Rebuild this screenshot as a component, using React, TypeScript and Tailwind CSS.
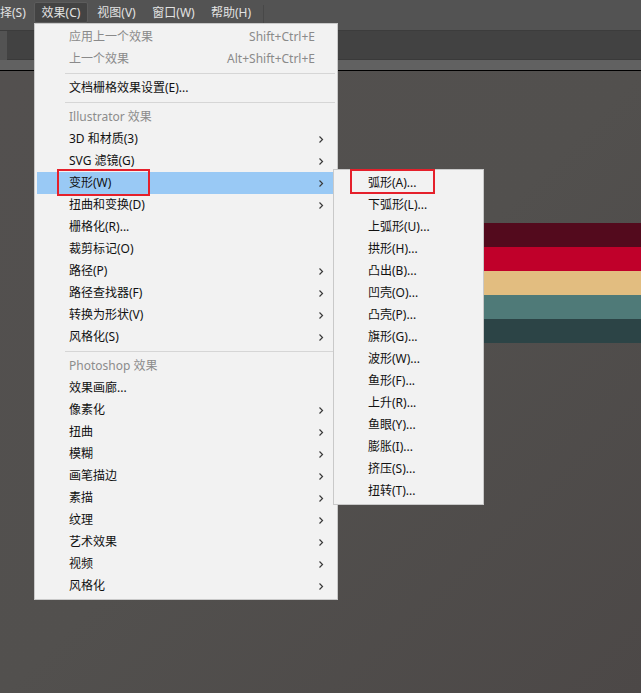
import React from 'react';

type Item = {
  label?: string;
  shortcut?: string;
  arrow?: boolean;
  disabled?: boolean;
  header?: boolean;
  sep?: boolean;
  active?: boolean;
};

const effectItems: Item[] = [
  { label: '应用上一个效果', shortcut: 'Shift+Ctrl+E', disabled: true },
  { label: '上一个效果', shortcut: 'Alt+Shift+Ctrl+E', disabled: true },
  { sep: true },
  { label: '文档栅格效果设置(E)...' },
  { sep: true },
  { label: 'Illustrator 效果', header: true },
  { label: '3D 和材质(3)', arrow: true },
  { label: 'SVG 滤镜(G)', arrow: true },
  { label: '变形(W)', arrow: true, active: true },
  { label: '扭曲和变换(D)', arrow: true },
  { label: '栅格化(R)...' },
  { label: '裁剪标记(O)' },
  { label: '路径(P)', arrow: true },
  { label: '路径查找器(F)', arrow: true },
  { label: '转换为形状(V)', arrow: true },
  { label: '风格化(S)', arrow: true },
  { sep: true },
  { label: 'Photoshop 效果', header: true },
  { label: '效果画廊...' },
  { label: '像素化', arrow: true },
  { label: '扭曲', arrow: true },
  { label: '模糊', arrow: true },
  { label: '画笔描边', arrow: true },
  { label: '素描', arrow: true },
  { label: '纹理', arrow: true },
  { label: '艺术效果', arrow: true },
  { label: '视频', arrow: true },
  { label: '风格化', arrow: true },
];

const warpItems = [
  '弧形(A)...',
  '下弧形(L)...',
  '上弧形(U)...',
  '拱形(H)...',
  '凸出(B)...',
  '凹壳(O)...',
  '凸壳(P)...',
  '旗形(G)...',
  '波形(W)...',
  '鱼形(F)...',
  '上升(R)...',
  '鱼眼(Y)...',
  '膨胀(I)...',
  '挤压(S)...',
  '扭转(T)...',
];

function Chevron() {
  return (
    <svg width="6" height="9" viewBox="0 0 6 9" className="shrink-0">
      <path d="M1.5 1.5 L4.5 4.5 L1.5 7.5" fill="none" stroke="#3a3a3a" strokeWidth="1.2" />
    </svg>
  );
}

function MenuRow({ item }: { item: Item }) {
  if (item.sep) {
    return (
      <div className="h-[7px] flex items-center pl-[28px]">
        <div className="h-px w-full bg-[#d6d6d6]" />
      </div>
    );
  }
  const color = item.header ? 'text-[#8c8c8c]' : item.disabled ? 'text-[#8a8a8a]' : 'text-[#111]';
  return (
    <div
      className={`h-[22px] flex items-center pl-[32px] ${item.shortcut ? 'pr-[20px]' : 'pr-[11px]'} ${
        item.active ? 'bg-[#99c9f5]' : ''
      }`}
    >
      <span className={`flex-1 whitespace-nowrap leading-[22px] ${color}`}>{item.label}</span>
      {item.shortcut && <span className="text-[#8a8a8a] whitespace-nowrap leading-[22px]">{item.shortcut}</span>}
      {item.arrow && <Chevron />}
    </div>
  );
}

export default function App() {
  return (
    <div
      className="relative w-[641px] h-[693px] overflow-hidden flex flex-col text-[12px]"
      style={{ fontFamily: '"Noto Sans", "Noto Sans CJK SC", sans-serif' }}
    >
      {/* menu bar */}
      <div className="h-[30px] bg-[#535353] flex items-start text-[#e2e2e2]">
        <div className="h-[23px] flex items-start pt-[2px]">
          <div className="w-[34px] h-[21px] flex items-center whitespace-nowrap">择(S)</div>
          <div className="w-[54px] h-[21px] flex items-center justify-center whitespace-nowrap bg-[#434343] border border-[#5c5c5c] rounded-[2px]">
            效果(C)
          </div>
          <div className="w-[55px] h-[21px] ml-px flex items-center justify-center whitespace-nowrap">视图(V)</div>
          <div className="w-[59px] h-[21px] flex items-center justify-center whitespace-nowrap">窗口(W)</div>
          <div className="w-[56px] h-[21px] flex items-center justify-center whitespace-nowrap">帮助(H)</div>
          <div className="ml-[4px] mt-[3px] w-px h-[18px] bg-[#484848]" />
        </div>
      </div>

      {/* control bar */}
      <div className="h-[30px] bg-[#535353] flex border-t border-[#3c3c3c]">
        <div className="w-[7px]" />
        <div className="flex-1 bg-[#424242] border-b border-[#3a3a3a]" />
      </div>
      <div className="h-[10px] bg-[#616161]" />
      <div className="h-px bg-black" />

      {/* canvas */}
      <div className="relative flex-1 bg-gradient-to-br from-[#53504f] via-[#52504e] to-[#4c4847]">
        <div className="absolute left-[400px] right-0 top-[152px] flex flex-col">
          <div className="h-[24px] bg-[#530a1d]" />
          <div className="h-[24px] bg-[#c0002a]" />
          <div className="h-[24px] bg-[#e2bd80]" />
          <div className="h-[24px] bg-[#4f7a78]" />
          <div className="h-[24px] bg-[#2c4446]" />
        </div>
      </div>

      {/* effects menu */}
      <div className="absolute left-[34px] top-[23px] w-[304px] bg-[#f2f2f2] border border-[#c9c9c9] px-[2px] pt-[2px] pb-[2px]">
        {effectItems.map((it, i) => (
          <MenuRow key={i} item={it} />
        ))}
      </div>

      {/* warp submenu */}
      <div className="absolute left-[333px] top-[169px] w-[151px] h-[336px] bg-[#f2f2f2] border border-[#c9c9c9] px-[1px] pt-[2px]">
        {warpItems.map((w) => (
          <div key={w} className="h-[22px] flex items-center pl-[33px] text-[#111] whitespace-nowrap leading-[22px]">
            {w}
          </div>
        ))}
      </div>

      {/* annotation boxes */}
      <div className="absolute left-[57px] top-[169px] w-[93px] h-[27px] border-2 border-[#e5202b]" />
      <div className="absolute left-[350px] top-[169px] w-[85px] h-[25px] border-2 border-[#e5202b]" />
    </div>
  );
}
